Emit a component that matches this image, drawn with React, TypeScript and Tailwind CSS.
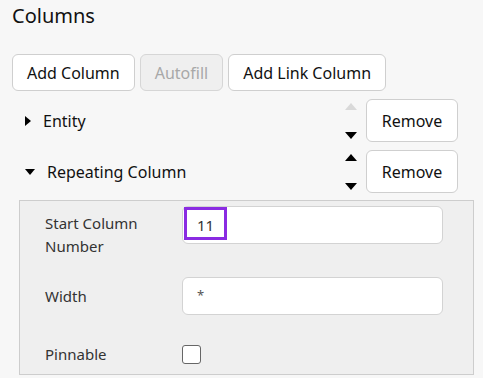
import { useState } from "react";

function Btn({ label, disabled }: { label: string; disabled?: boolean }) {
  return (
    <button
      className={`h-[37px] px-[14px] rounded-[6px] border text-[16px] ${
        disabled
          ? "bg-[#efefef] border-[#d6d6d6] text-[#a8a8a8]"
          : "bg-white border-[#cfcfcf] text-[#111]"
      }`}
    >
      {label}
    </button>
  );
}

function Arrows({ upDisabled }: { upDisabled?: boolean }) {
  return (
    <div className="flex flex-col justify-between h-[36px] w-[12px] mr-[9px]">
      <svg width="12" height="7" viewBox="0 0 12 7">
        <path d="M0 7 L6 0 L12 7 Z" fill={upDisabled ? "#d9d9d9" : "#000"} />
      </svg>
      <svg width="12" height="7" viewBox="0 0 12 7">
        <path d="M0 0 L12 0 L6 7 Z" fill="#000" />
      </svg>
    </div>
  );
}

function TreeRow({
  label,
  open,
  upDisabled,
}: {
  label: string;
  open?: boolean;
  upDisabled?: boolean;
}) {
  return (
    <div className="flex items-center h-[43px] pr-[25px]">
      <div className="flex items-center flex-1 pl-[25px]">
        {open ? (
          <svg width="10" height="6" viewBox="0 0 10 6">
            <path d="M0 0 L10 0 L5 6 Z" fill="#000" />
          </svg>
        ) : (
          <svg width="6" height="10" viewBox="0 0 6 10">
            <path d="M0 0 L6 5 L0 10 Z" fill="#000" />
          </svg>
        )}
        <span className="ml-[12px] text-[16px] text-[#111]">{label}</span>
      </div>
      <Arrows upDisabled={upDisabled} />
      <button className="h-[43px] w-[92px] rounded-[6px] border border-[#cfcfcf] bg-white text-[16px] text-[#111]">
        Remove
      </button>
    </div>
  );
}

export default function App() {
  const [pinned, setPinned] = useState(false);
  return (
    <div
      className="w-[483px] h-[378px] bg-[#f7f7f7] overflow-hidden text-[#222]"
      style={{ fontFamily: '"Noto Sans", "Open Sans", sans-serif' }}
    >
      <h2 className="pl-[12px] pt-[1px] text-[20px] leading-[30px] text-[#111]">Columns</h2>
      <div className="flex gap-[5px] pl-[12px] mt-[23px]">
        <Btn label="Add Column" />
        <Btn label="Autofill" disabled />
        <Btn label="Add Link Column" />
      </div>
      <div className="mt-[8px] flex flex-col gap-[8px]">
        <TreeRow label="Entity" upDisabled />
        <TreeRow label="Repeating Column" open />
      </div>
      <div className="ml-[19px] mr-[9px] mt-[7px] border border-[#cdcdcd] bg-[#efefef] pl-[25px] pr-[30px] pt-[5px] pb-[9px]">
        <div className="flex items-start">
          <div className="w-[137px] pt-[6px] text-[15px] leading-[23px] text-[#333]">
            Start Column
            <br />
            Number
          </div>
          <div className="relative flex-1 h-[38px] rounded-[6px] border border-[#d3d3d3] bg-white">
            <div className="absolute left-[1px] top-[0px] w-[43px] h-[33px] border-[3px] border-[#8a2be2]" />
            <span className="absolute left-[14px] top-[7px] text-[15px] text-[#333]">11</span>
          </div>
        </div>
        <div className="flex items-center mt-[19px]">
          <div className="w-[137px] text-[15px] leading-[22px] text-[#333]">Width</div>
          <div className="flex-1 h-[38px] rounded-[6px] border border-[#d3d3d3] bg-white flex items-center pl-[14px] text-[13px] text-[#555]">
            *
          </div>
        </div>
        <div className="flex items-center h-[22px] mt-[28px]">
          <div className="w-[137px] text-[15px] leading-[22px] text-[#333]">Pinnable</div>
          <button
            onClick={() => setPinned(!pinned)}
            className="w-[19px] h-[19px] rounded-[3px] border border-[#666] bg-white"
          />
        </div>
      </div>
    </div>
  );
}
